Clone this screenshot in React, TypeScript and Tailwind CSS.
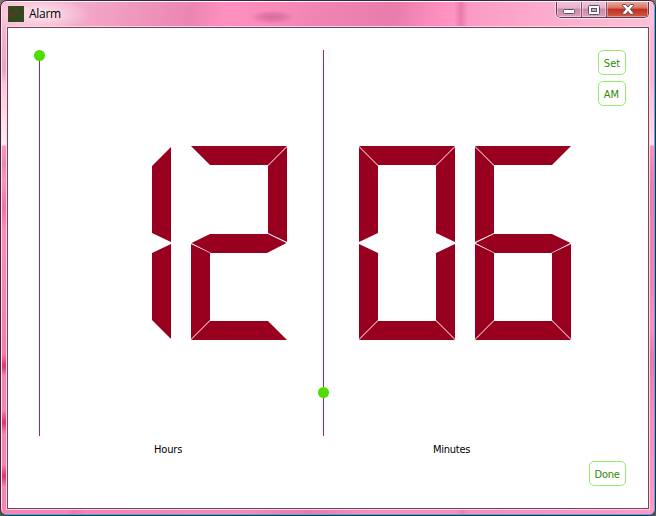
import React from "react";

const SEGMENTS: Record<string, string> = {
  top: "0,0 96,0 77,19 19,19",
  upperLeft: "0,1 19,20 19,87 0,96",
  upperRight: "96,1 96,96 77,87 77,20",
  middle: "0.5,97 19,88 77,88 95.5,97 76,107 20,107",
  lowerLeft: "0,98 19,107 19,174 0,193",
  lowerRight: "96,98 96,193 77,174 77,107",
  bottom: "19,175 77,175 96,194 0,194",
};

const LIT: Record<string, string[]> = {
  "0": ["top", "upperLeft", "upperRight", "lowerLeft", "lowerRight", "bottom"],
  "1": ["upperRight", "lowerRight"],
  "2": ["top", "upperRight", "middle", "lowerLeft", "bottom"],
  "6": ["top", "upperLeft", "middle", "lowerLeft", "lowerRight", "bottom"],
};

function Digit({ value }: { value: string }) {
  return (
    <svg width="96" height="194" viewBox="0 0 96 194" className="block shrink-0">
      {LIT[value].map((name) => (
        <polygon key={name} points={SEGMENTS[name]} fill="#990020" />
      ))}
    </svg>
  );
}

function Slider({ thumb }: { thumb: string }) {
  return (
    <div className="flex h-[386px] w-[11px] shrink-0 justify-center bg-[linear-gradient(#a52a46,#a52a46)] bg-[length:1px_100%] bg-[position:5px_0] bg-no-repeat">
      <div className={`size-[11px] rounded-full bg-[#4ddd00] ${thumb}`} />
    </div>
  );
}

function TimePanel({ digits, label, width, labelClass }: { digits: string; label: string; width: string; labelClass: string }) {
  return (
    <div className={`flex shrink-0 flex-col pt-24 pl-[30px] ${width}`}>
      <div className="flex gap-5">
        {digits.split("").map((d, i) => (
          <Digit key={i} value={d} />
        ))}
      </div>
      <div className={`mt-[103px] text-[11px] leading-[14px] text-black ${labelClass}`}>{label}</div>
    </div>
  );
}

function Button({ children, className }: { children: React.ReactNode; className: string }) {
  return (
    <button className={`flex h-[25px] items-center justify-center rounded-[5px] border border-[#94ec6a] bg-white pt-[2px] text-[11px] leading-none text-[#2e8b00] ${className}`}>
      {children}
    </button>
  );
}

function AppIcon() {
  return (
    <svg width="16" height="16" viewBox="0 0 16 16" className="block">
      <rect width="16" height="16" fill="#22501a" />
      <g fill="none" stroke="#7c2930" strokeWidth="1">
        <path d="M2.5 0.5L1 3v3l2 2h3l2-2V2L6.500.5M8 6.500L6 9v4l2 2h4l2.500-2V8L12 6.500zM8 3l3-1.500h4.500M14.500 2v4M0 8l2 1 4 1.500M2 9v4" />
      </g>
    </svg>
  );
}

function WindowControls() {
  return (
    <div className="flex h-[17px] w-[93px] overflow-hidden rounded-b-[5px] border border-t-0 border-[#66364f] shadow-[0_1px_0_#ffe5f0,1px_0_0_#ffd9e8,-1px_0_0_#ffd9e8]">
      <div className="flex w-[25px] items-center justify-center border-r border-[#844f69] bg-[linear-gradient(#f2c5d9_0,#e7b1c9_45%,#c986a7_50%,#dda2bc_100%)] shadow-[inset_0_0_0_1px_#ffffff70]">
        <svg width="12" height="6" viewBox="0 0 12 6" className="mt-[6px]">
          <rect x="0.5" y="0.5" width="11" height="4" rx="1" fill="#fff" stroke="#555666" />
        </svg>
      </div>
      <div className="flex w-[25px] items-center justify-center border-r border-[#844f69] bg-[linear-gradient(#f2c5d9_0,#e7b1c9_45%,#c986a7_50%,#dda2bc_100%)] shadow-[inset_0_0_0_1px_#ffffff70]">
        <svg width="12" height="10" viewBox="0 0 12 10" className="mt-px">
          <rect x="0.5" y="0.5" width="11" height="9" rx="1" fill="#fff" stroke="#555666" />
          <rect x="3.5" y="3.5" width="5" height="3" fill="#d9a0ba" stroke="#555666" />
        </svg>
      </div>
      <div className="flex flex-1 items-center justify-center bg-[linear-gradient(#efb2a6_0,#d9705f_45%,#b83122_50%,#d9573e_100%)] shadow-[inset_0_0_0_1px_#ffffff60]">
        <svg width="12" height="11" viewBox="0 0 12 11">
          <path d="M.5.5h3.2L6 3.2 8.3.5h3.2v1.2L8.4 5.2l3.1 3.9v1.2H8.3L6 7.400l-2.300 2.900H.5V9.100l3.100-3.900L.5 1.700z" fill="#fff" stroke="#5b5260" />
        </svg>
      </div>
    </div>
  );
}

export default function App() {
  return (
    <div className="h-[516px] w-[656px] overflow-hidden bg-[linear-gradient(#777,#555)] font-['DejaVu_Sans_Condensed','DejaVu_Sans',sans-serif]">
      <div className="flex h-full flex-col overflow-hidden rounded-[7px] border border-[#482036] bg-[#fa89b7]">
        <div className="flex flex-1 flex-col overflow-hidden rounded-[6px] border border-t-white border-r-[#18c5fa] border-b-[#18c5fa] border-l-[#ffe2ee]">
          <header className="flex h-6 shrink-0 items-start justify-between bg-[radial-gradient(ellipse_22px_7px_at_270px_15px,#b44a7b70,#b44a7b50_50%,transparent),linear-gradient(90deg,transparent_452px,#dd699ea0_459px,transparent_466px),radial-gradient(ellipse_52px_18px_at_38px_12px,#ffffffb0,transparent),linear-gradient(100deg,#f7bcd3_0,#f3a8c8_80px,#eb85b2_190px,#ff90c0_220px,#fb8dbd_250px,#f085b4_310px,#e87dad_390px,#ff91c1_435px,#fb9fc7_480px,#fbacce_540px,#fbc4db_660px)]">
            <div className="flex items-center gap-[5px] pt-1 pl-[6px]">
              <AppIcon />
              <span className="font-['Open_Sans','Noto_Sans',sans-serif] text-[12px] leading-4 tracking-[-0.3px] text-black">Alarm</span>
            </div>
            <div className="mr-[5px] -mt-px">
              <WindowControls />
            </div>
          </header>
          <div className="flex min-h-0 flex-1">
            <div className="w-1 shrink-0 bg-[linear-gradient(#f6b7d0_0,#eaa3c1_45px,#ffc5db_58px,#fff1f7_119px,#f49cc1_120px,#eb88b1_138px,#ff94c1_155px,#f76eaa_182px,#ff8bbb_205px,#f57dae_328px,#db3474_340px,#f884b3_350px,#f884b3_384px,#db3474_396px,#f884b3_408px,#f884b3_438px,#db3474_450px,#f884b3_461px)]" />
            <div className="flex w-[644px] shrink-0 flex-col">
              <main className="h-[484px] border border-[#ffd5e6]">
                <div className="flex h-full border border-[#784459] bg-white pt-[22px] pl-[26px]">
                  <Slider thumb="mt-0" />
                  <TimePanel digits="12" label="Hours" width="w-[273px]" labelClass="pl-[79px] tracking-[-0.15px]" />
                  <Slider thumb="mt-[337px]" />
                  <TimePanel digits="06" label="Minutes" width="w-[260px]" labelClass="pl-[74px] tracking-[-0.25px]" />
                  <div className="flex h-[436px] w-[37px] shrink-0 flex-col items-end">
                    <Button className="w-7">Set</Button>
                    <Button className="mt-[6px] w-7 pr-px">AM</Button>
                    <Button className="mt-auto w-[37px] pr-px tracking-[-0.3px]">Done</Button>
                  </div>
                </div>
              </main>
              <div className="h-1 shrink-0 bg-[linear-gradient(90deg,#f784b4_0,#f784b4_60px,#ed77a9_68px,#f784b4_80px,#f58bb7_240px,#e87cac_305px,#fa8fbc_360px,#fa8fbc_450px,#e782b0_456px,#fa8fbc_463px,#ff99c7_643px)]" />
            </div>
            <div className="flex-1 bg-[linear-gradient(#fbb8d4_0,#fbb6d2_50px,#fde1ed_119px,#ff92bf_120px,#e77eac_158px,#ef83b3_260px,#ff8fbf_300px,#e57aa9_330px,#f78cba_390px,#ff98c5_484px)]" />
          </div>
        </div>
      </div>
    </div>
  );
}
